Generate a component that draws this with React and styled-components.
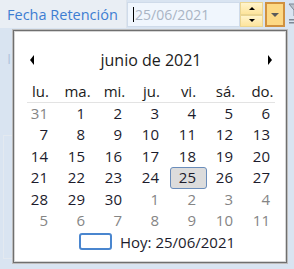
import React from 'react';
import styled, { createGlobalStyle, css } from 'styled-components';

const GlobalStyle = createGlobalStyle`
  html, body {
    margin: 0;
    padding: 0;
  }
  body {
    background: #d9e4f1;
    font-family: 'Open Sans', 'Liberation Sans', sans-serif;
  }
`;

const Page = styled.div`
  position: relative;
  width: 294px;
  height: 269px;
  overflow: hidden;
  background: #d9e4f1;
`;

const TopBar = styled.div`
  display: flex;
  height: 28px;
`;

const Label = styled.div`
  width: 127px;
  flex-shrink: 0;
  box-sizing: border-box;
  display: flex;
  align-items: center;
  padding-left: 7px;
  background: #e9eef4;
  border-right: 1px solid #dde4ec;
  color: #3d7dd2;
  font-size: 14.5px;
  white-space: nowrap;
`;

const Field = styled.div`
  display: flex;
  flex-shrink: 0;
  height: 25px;
  margin-top: 2px;
`;

const DateInput = styled.div`
  width: 113px;
  box-sizing: border-box;
  display: flex;
  align-items: center;
  padding-left: 5px;
  background: #f0f6fd;
  border: 1px solid #cfdbea;
  color: #a9b4c4;
  font-size: 14px;
`;

const Caret = styled.span`
  width: 1px;
  height: 15px;
  margin-right: 1px;
  background: #000;
`;

const Spinner = styled.div`
  display: flex;
  flex-direction: column;
  width: 23px;
`;

const SpinBtn = styled.div`
  flex: 1;
  display: flex;
  align-items: center;
  justify-content: center;
  background: linear-gradient(#fff4cc, #fde49c);
  border: 1px solid #ead592;
`;

const Triangle = styled.span`
  width: 0;
  height: 0;
  ${({ $dir, $size = 3, $color = '#000' }) => {
    if ($dir === 'up')
      return css`
        border-left: ${$size}px solid transparent;
        border-right: ${$size}px solid transparent;
        border-bottom: ${$size}px solid ${$color};
      `;
    if ($dir === 'down')
      return css`
        border-left: ${$size}px solid transparent;
        border-right: ${$size}px solid transparent;
        border-top: ${$size}px solid ${$color};
      `;
    if ($dir === 'left')
      return css`
        border-top: ${$size}px solid transparent;
        border-bottom: ${$size}px solid transparent;
        border-right: ${$size * 0.8}px solid ${$color};
      `;
    return css`
      border-top: ${$size}px solid transparent;
      border-bottom: ${$size}px solid transparent;
      border-left: ${$size * 0.8}px solid ${$color};
    `;
  }}
`;

const DropBtn = styled.div`
  width: 20px;
  margin-left: 2px;
  box-sizing: border-box;
  display: flex;
  align-items: center;
  justify-content: center;
  background: #fdd985;
  border: 2px solid #d0913f;
`;

const FilterIcon = styled.svg`
  margin: 3px 0 0 3px;
  flex-shrink: 0;
`;

const UnderLabel = styled.div`
  margin-top: 22px;
  padding-left: 7px;
  color: #b3c6de;
  font-size: 15px;
  line-height: 16px;
`;

const GhostBox = styled.div`
  width: 20px;
  height: 122px;
  margin: 69px 0 0 3px;
  border: 1px solid #e3e9f0;
`;

const Popup = styled.div`
  position: absolute;
  left: 12px;
  top: 29px;
  width: 276px;
  height: 235px;
  box-sizing: border-box;
  padding: 19px 6px 0 9px;
  background: #fff;
  border: 1px solid #bdbdbd;
  box-shadow: inset 0 0 0 1px #6f6f6f, inset 0 0 0 2px #d6d6d6;
`;

const Header = styled.div`
  display: flex;
  align-items: center;
  justify-content: space-between;
  height: 22px;
  padding: 0 9px 0 8px;
`;

const Title = styled.span`
  color: #1b1b1b;
  font-size: 16px;
`;

const WeekRow = styled.div`
  display: grid;
  grid-template-columns: repeat(7, 37px);
  height: 21px;
  margin-top: 10px;
`;

const WeekDay = styled.div`
  text-align: center;
  color: #1b1b1b;
  font-size: 15px;
  line-height: 21px;
`;

const Separator = styled.div`
  height: 1px;
  margin: 0 6px 0 5px;
  background: #e3e3e3;
`;

const DaysGrid = styled.div`
  display: grid;
  grid-template-columns: repeat(7, 37px);
  grid-auto-rows: 21.4px;
`;

const Day = styled.div`
  box-sizing: border-box;
  padding-right: 11px;
  text-align: right;
  font-size: 15px;
  line-height: 21px;
  color: ${({ $other }) => ($other ? '#858585' : '#1c1c2c')};
  ${({ $selected }) =>
    $selected &&
    css`
      padding-right: 10px;
      line-height: 19px;
      background: #dcdcdc;
      border: 1px solid #6a8dbb;
      border-radius: 3px;
    `}
`;

const Footer = styled.div`
  display: flex;
  align-items: center;
  gap: 8px;
  height: 21px;
  padding-left: 57px;
`;

const TodayBox = styled.span`
  width: 33px;
  height: 17px;
  box-sizing: border-box;
  border: 2px solid #4a86cf;
  border-radius: 3px;
`;

const TodayText = styled.span`
  color: #1c1c2c;
  font-size: 15px;
`;

const weekDays = ['lu.', 'ma.', 'mi.', 'ju.', 'vi.', 'sá.', 'do.'];

const buildDays = () => {
  const days = [{ d: 31, other: true }];
  for (let i = 1; i <= 30; i++) days.push({ d: i, other: false });
  for (let i = 1; i <= 11; i++) days.push({ d: i, other: true });
  return days;
};

export default function App() {
  const days = buildDays();
  return (
    <>
      <GlobalStyle />
      <Page>
        <TopBar>
          <Label>Fecha Retención</Label>
          <Field>
            <DateInput>
              <Caret />
              25/06/2021
            </DateInput>
            <Spinner>
              <SpinBtn>
                <Triangle $dir="up" $size={3} />
              </SpinBtn>
              <SpinBtn>
                <Triangle $dir="down" $size={3} />
              </SpinBtn>
            </Spinner>
            <DropBtn>
              <Triangle $dir="down" $size={4} $color="#5a5a5a" />
            </DropBtn>
          </Field>
          <FilterIcon width="14" height="22" viewBox="0 0 14 22">
            <path d="M1 1 H13 L8 7 V12 L6 13 V7 Z" fill="#b9c2cc" stroke="#7d8794" strokeWidth="1" />
            <rect x="1" y="16" width="12" height="1.5" fill="#7d8794" />
            <rect x="1" y="19" width="12" height="1.5" fill="#7d8794" />
          </FilterIcon>
        </TopBar>
        <UnderLabel>In</UnderLabel>
        <GhostBox />

        <Popup>
          <Header>
            <Triangle $dir="left" $size={5} />
            <Title>junio de 2021</Title>
            <Triangle $dir="right" $size={5} />
          </Header>
          <WeekRow>
            {weekDays.map((w) => (
              <WeekDay key={w}>{w}</WeekDay>
            ))}
          </WeekRow>
          <Separator />
          <DaysGrid>
            {days.map((day, i) => (
              <Day key={i} $other={day.other} $selected={!day.other && day.d === 25}>
                {day.d}
              </Day>
            ))}
          </DaysGrid>
          <Footer>
            <TodayBox />
            <TodayText>Hoy: 25/06/2021</TodayText>
          </Footer>
        </Popup>
      </Page>
    </>
  );
}
